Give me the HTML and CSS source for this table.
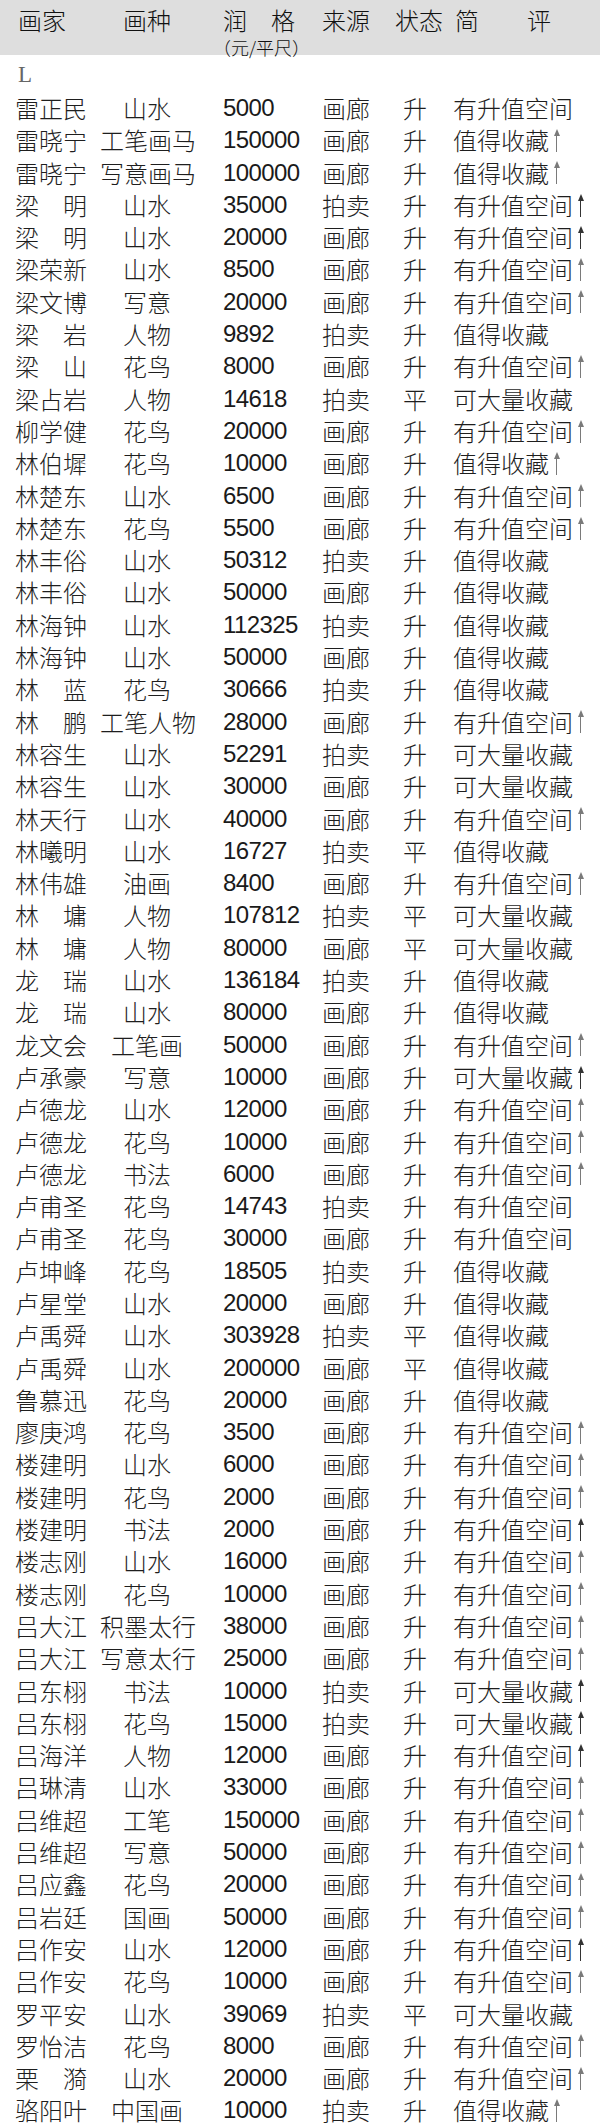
FILE: index.html
```html
<!DOCTYPE html>
<html lang="zh-CN">
<head>
<meta charset="utf-8">
<title>画家润格</title>
<link rel="stylesheet" href="styles.css">
</head>
<body>
<div class="sheet">
  <div class="head">
    <div class="h-name">画家</div>
    <div class="h-type">画种</div>
    <div class="h-price"><div>润　格</div><div class="unit">（元/平尺）</div></div>
    <div class="h-src">来源</div>
    <div class="h-state">状态</div>
    <div class="h-note">简　　评</div>
  </div>
  <div class="letter">L</div>
  <div class="rows">
    <div class="row"><span class="n">雷正民</span><span class="t">山水</span><span class="p">5000</span><span class="s">画廊</span><span class="st">升</span><span class="c">有升值空间</span></div>
    <div class="row"><span class="n">雷晓宁</span><span class="t">工笔画马</span><span class="p">150000</span><span class="s">画廊</span><span class="st">升</span><span class="c">值得收藏<i class="up"></i></span></div>
    <div class="row"><span class="n">雷晓宁</span><span class="t">写意画马</span><span class="p">100000</span><span class="s">画廊</span><span class="st">升</span><span class="c">值得收藏<i class="up"></i></span></div>
    <div class="row"><span class="n">梁　明</span><span class="t">山水</span><span class="p">35000</span><span class="s">拍卖</span><span class="st">升</span><span class="c">有升值空间<i class="up dark"></i></span></div>
    <div class="row"><span class="n">梁　明</span><span class="t">山水</span><span class="p">20000</span><span class="s">画廊</span><span class="st">升</span><span class="c">有升值空间<i class="up dark"></i></span></div>
    <div class="row"><span class="n">梁荣新</span><span class="t">山水</span><span class="p">8500</span><span class="s">画廊</span><span class="st">升</span><span class="c">有升值空间<i class="up"></i></span></div>
    <div class="row"><span class="n">梁文博</span><span class="t">写意</span><span class="p">20000</span><span class="s">画廊</span><span class="st">升</span><span class="c">有升值空间<i class="up"></i></span></div>
    <div class="row"><span class="n">梁　岩</span><span class="t">人物</span><span class="p">9892</span><span class="s">拍卖</span><span class="st">升</span><span class="c">值得收藏</span></div>
    <div class="row"><span class="n">梁　山</span><span class="t">花鸟</span><span class="p">8000</span><span class="s">画廊</span><span class="st">升</span><span class="c">有升值空间<i class="up"></i></span></div>
    <div class="row"><span class="n">梁占岩</span><span class="t">人物</span><span class="p">14618</span><span class="s">拍卖</span><span class="st">平</span><span class="c">可大量收藏</span></div>
    <div class="row"><span class="n">柳学健</span><span class="t">花鸟</span><span class="p">20000</span><span class="s">画廊</span><span class="st">升</span><span class="c">有升值空间<i class="up"></i></span></div>
    <div class="row"><span class="n">林伯墀</span><span class="t">花鸟</span><span class="p">10000</span><span class="s">画廊</span><span class="st">升</span><span class="c">值得收藏<i class="up"></i></span></div>
    <div class="row"><span class="n">林楚东</span><span class="t">山水</span><span class="p">6500</span><span class="s">画廊</span><span class="st">升</span><span class="c">有升值空间<i class="up"></i></span></div>
    <div class="row"><span class="n">林楚东</span><span class="t">花鸟</span><span class="p">5500</span><span class="s">画廊</span><span class="st">升</span><span class="c">有升值空间<i class="up"></i></span></div>
    <div class="row"><span class="n">林丰俗</span><span class="t">山水</span><span class="p">50312</span><span class="s">拍卖</span><span class="st">升</span><span class="c">值得收藏</span></div>
    <div class="row"><span class="n">林丰俗</span><span class="t">山水</span><span class="p">50000</span><span class="s">画廊</span><span class="st">升</span><span class="c">值得收藏</span></div>
    <div class="row"><span class="n">林海钟</span><span class="t">山水</span><span class="p">112325</span><span class="s">拍卖</span><span class="st">升</span><span class="c">值得收藏</span></div>
    <div class="row"><span class="n">林海钟</span><span class="t">山水</span><span class="p">50000</span><span class="s">画廊</span><span class="st">升</span><span class="c">值得收藏</span></div>
    <div class="row"><span class="n">林　蓝</span><span class="t">花鸟</span><span class="p">30666</span><span class="s">拍卖</span><span class="st">升</span><span class="c">值得收藏</span></div>
    <div class="row"><span class="n">林　鹏</span><span class="t">工笔人物</span><span class="p">28000</span><span class="s">画廊</span><span class="st">升</span><span class="c">有升值空间<i class="up"></i></span></div>
    <div class="row"><span class="n">林容生</span><span class="t">山水</span><span class="p">52291</span><span class="s">拍卖</span><span class="st">升</span><span class="c">可大量收藏</span></div>
    <div class="row"><span class="n">林容生</span><span class="t">山水</span><span class="p">30000</span><span class="s">画廊</span><span class="st">升</span><span class="c">可大量收藏</span></div>
    <div class="row"><span class="n">林天行</span><span class="t">山水</span><span class="p">40000</span><span class="s">画廊</span><span class="st">升</span><span class="c">有升值空间<i class="up"></i></span></div>
    <div class="row"><span class="n">林曦明</span><span class="t">山水</span><span class="p">16727</span><span class="s">拍卖</span><span class="st">平</span><span class="c">值得收藏</span></div>
    <div class="row"><span class="n">林伟雄</span><span class="t">油画</span><span class="p">8400</span><span class="s">画廊</span><span class="st">升</span><span class="c">有升值空间<i class="up"></i></span></div>
    <div class="row"><span class="n">林　墉</span><span class="t">人物</span><span class="p">107812</span><span class="s">拍卖</span><span class="st">平</span><span class="c">可大量收藏</span></div>
    <div class="row"><span class="n">林　墉</span><span class="t">人物</span><span class="p">80000</span><span class="s">画廊</span><span class="st">平</span><span class="c">可大量收藏</span></div>
    <div class="row"><span class="n">龙　瑞</span><span class="t">山水</span><span class="p">136184</span><span class="s">拍卖</span><span class="st">升</span><span class="c">值得收藏</span></div>
    <div class="row"><span class="n">龙　瑞</span><span class="t">山水</span><span class="p">80000</span><span class="s">画廊</span><span class="st">升</span><span class="c">值得收藏</span></div>
    <div class="row"><span class="n">龙文会</span><span class="t">工笔画</span><span class="p">50000</span><span class="s">画廊</span><span class="st">升</span><span class="c">有升值空间<i class="up"></i></span></div>
    <div class="row"><span class="n">卢承豪</span><span class="t">写意</span><span class="p">10000</span><span class="s">画廊</span><span class="st">升</span><span class="c">可大量收藏<i class="up dark"></i></span></div>
    <div class="row"><span class="n">卢德龙</span><span class="t">山水</span><span class="p">12000</span><span class="s">画廊</span><span class="st">升</span><span class="c">有升值空间<i class="up"></i></span></div>
    <div class="row"><span class="n">卢德龙</span><span class="t">花鸟</span><span class="p">10000</span><span class="s">画廊</span><span class="st">升</span><span class="c">有升值空间<i class="up"></i></span></div>
    <div class="row"><span class="n">卢德龙</span><span class="t">书法</span><span class="p">6000</span><span class="s">画廊</span><span class="st">升</span><span class="c">有升值空间<i class="up"></i></span></div>
    <div class="row"><span class="n">卢甫圣</span><span class="t">花鸟</span><span class="p">14743</span><span class="s">拍卖</span><span class="st">升</span><span class="c">有升值空间</span></div>
    <div class="row"><span class="n">卢甫圣</span><span class="t">花鸟</span><span class="p">30000</span><span class="s">画廊</span><span class="st">升</span><span class="c">有升值空间</span></div>
    <div class="row"><span class="n">卢坤峰</span><span class="t">花鸟</span><span class="p">18505</span><span class="s">拍卖</span><span class="st">升</span><span class="c">值得收藏</span></div>
    <div class="row"><span class="n">卢星堂</span><span class="t">山水</span><span class="p">20000</span><span class="s">画廊</span><span class="st">升</span><span class="c">值得收藏</span></div>
    <div class="row"><span class="n">卢禹舜</span><span class="t">山水</span><span class="p">303928</span><span class="s">拍卖</span><span class="st">平</span><span class="c">值得收藏</span></div>
    <div class="row"><span class="n">卢禹舜</span><span class="t">山水</span><span class="p">200000</span><span class="s">画廊</span><span class="st">平</span><span class="c">值得收藏</span></div>
    <div class="row"><span class="n">鲁慕迅</span><span class="t">花鸟</span><span class="p">20000</span><span class="s">画廊</span><span class="st">升</span><span class="c">值得收藏</span></div>
    <div class="row"><span class="n">廖庚鸿</span><span class="t">花鸟</span><span class="p">3500</span><span class="s">画廊</span><span class="st">升</span><span class="c">有升值空间<i class="up"></i></span></div>
    <div class="row"><span class="n">楼建明</span><span class="t">山水</span><span class="p">6000</span><span class="s">画廊</span><span class="st">升</span><span class="c">有升值空间<i class="up"></i></span></div>
    <div class="row"><span class="n">楼建明</span><span class="t">花鸟</span><span class="p">2000</span><span class="s">画廊</span><span class="st">升</span><span class="c">有升值空间<i class="up"></i></span></div>
    <div class="row"><span class="n">楼建明</span><span class="t">书法</span><span class="p">2000</span><span class="s">画廊</span><span class="st">升</span><span class="c">有升值空间<i class="up dark"></i></span></div>
    <div class="row"><span class="n">楼志刚</span><span class="t">山水</span><span class="p">16000</span><span class="s">画廊</span><span class="st">升</span><span class="c">有升值空间<i class="up"></i></span></div>
    <div class="row"><span class="n">楼志刚</span><span class="t">花鸟</span><span class="p">10000</span><span class="s">画廊</span><span class="st">升</span><span class="c">有升值空间<i class="up"></i></span></div>
    <div class="row"><span class="n">吕大江</span><span class="t">积墨太行</span><span class="p">38000</span><span class="s">画廊</span><span class="st">升</span><span class="c">有升值空间<i class="up"></i></span></div>
    <div class="row"><span class="n">吕大江</span><span class="t">写意太行</span><span class="p">25000</span><span class="s">画廊</span><span class="st">升</span><span class="c">有升值空间<i class="up"></i></span></div>
    <div class="row"><span class="n">吕东栩</span><span class="t">书法</span><span class="p">10000</span><span class="s">拍卖</span><span class="st">升</span><span class="c">可大量收藏<i class="up dark"></i></span></div>
    <div class="row"><span class="n">吕东栩</span><span class="t">花鸟</span><span class="p">15000</span><span class="s">拍卖</span><span class="st">升</span><span class="c">可大量收藏<i class="up dark"></i></span></div>
    <div class="row"><span class="n">吕海洋</span><span class="t">人物</span><span class="p">12000</span><span class="s">画廊</span><span class="st">升</span><span class="c">有升值空间<i class="up dark"></i></span></div>
    <div class="row"><span class="n">吕琳清</span><span class="t">山水</span><span class="p">33000</span><span class="s">画廊</span><span class="st">升</span><span class="c">有升值空间<i class="up"></i></span></div>
    <div class="row"><span class="n">吕维超</span><span class="t">工笔</span><span class="p">150000</span><span class="s">画廊</span><span class="st">升</span><span class="c">有升值空间<i class="up"></i></span></div>
    <div class="row"><span class="n">吕维超</span><span class="t">写意</span><span class="p">50000</span><span class="s">画廊</span><span class="st">升</span><span class="c">有升值空间<i class="up"></i></span></div>
    <div class="row"><span class="n">吕应鑫</span><span class="t">花鸟</span><span class="p">20000</span><span class="s">画廊</span><span class="st">升</span><span class="c">有升值空间<i class="up"></i></span></div>
    <div class="row"><span class="n">吕岩廷</span><span class="t">国画</span><span class="p">50000</span><span class="s">画廊</span><span class="st">升</span><span class="c">有升值空间<i class="up"></i></span></div>
    <div class="row"><span class="n">吕作安</span><span class="t">山水</span><span class="p">12000</span><span class="s">画廊</span><span class="st">升</span><span class="c">有升值空间<i class="up dark"></i></span></div>
    <div class="row"><span class="n">吕作安</span><span class="t">花鸟</span><span class="p">10000</span><span class="s">画廊</span><span class="st">升</span><span class="c">有升值空间<i class="up"></i></span></div>
    <div class="row"><span class="n">罗平安</span><span class="t">山水</span><span class="p">39069</span><span class="s">拍卖</span><span class="st">平</span><span class="c">可大量收藏</span></div>
    <div class="row"><span class="n">罗怡洁</span><span class="t">花鸟</span><span class="p">8000</span><span class="s">画廊</span><span class="st">升</span><span class="c">有升值空间<i class="up"></i></span></div>
    <div class="row"><span class="n">栗　漪</span><span class="t">山水</span><span class="p">20000</span><span class="s">画廊</span><span class="st">升</span><span class="c">有升值空间<i class="up"></i></span></div>
    <div class="row"><span class="n">骆阳叶</span><span class="t">中国画</span><span class="p">10000</span><span class="s">拍卖</span><span class="st">升</span><span class="c">值得收藏<i class="up"></i></span></div>
  </div>
</div>
</body>
</html>
```
FILE: styles.css
```css
html, body {
  margin: 0;
  padding: 0;
  background: #ffffff;
}

.sheet {
  width: 600px;
  font-family: "Noto Sans CJK SC", "Noto Sans", sans-serif;
  font-weight: 300;
  color: #1e1e1e;
}

.head,
.row {
  display: grid;
  grid-template-columns: 85px 94px 128px 70px 61px 1fr;
  padding-left: 15px;
}

.head {
  height: 55px;
  background: #dedede;
  box-sizing: border-box;
  padding-top: 4px;
  font-size: 24px;
  line-height: 32px;
  color: #111111;
  white-space: nowrap;
}

.h-name {
  padding-left: 3px;
}

.h-type {
  text-align: center;
}

.h-price {
  padding-left: 29px;
}

.unit {
  font-size: 18px;
  line-height: 18px;
  margin: 2px 0 0 -10px;
}

.h-state {
  padding-left: 3px;
}

.h-note {
  padding-left: 2px;
}

.letter {
  height: 37px;
  box-sizing: border-box;
  padding: 8px 0 0 18px;
  font-family: "Liberation Serif", serif;
  font-size: 23px;
  line-height: 24px;
  color: #666666;
}

.row {
  height: 32.3px;
  font-size: 24px;
  line-height: 32.3px;
  white-space: nowrap;
}

.t {
  text-align: center;
}

.p {
  padding-left: 29px;
  font-family: "Liberation Sans", "Noto Sans", sans-serif;
  font-weight: 400;
  font-size: 24px;
  letter-spacing: -0.6px;
  color: #1a1a1a;
}

.st {
  text-align: center;
  padding-right: 15px;
}

.c {
  display: flex;
  align-items: center;
}

.up {
  display: inline-block;
  position: relative;
  width: 9px;
  height: 23px;
  margin-left: 3px;
}

.up::before {
  content: "";
  position: absolute;
  left: 4px;
  top: 4px;
  bottom: 0;
  width: 1.2px;
  background: #7a7a7a;
}

.up::after {
  content: "";
  position: absolute;
  left: 1.5px;
  top: 0;
  border-left: 3.2px solid transparent;
  border-right: 3.2px solid transparent;
  border-bottom: 7px solid #7a7a7a;
}

.up.dark::before {
  background: #333333;
}

.up.dark::after {
  border-bottom-color: #333333;
}
```
